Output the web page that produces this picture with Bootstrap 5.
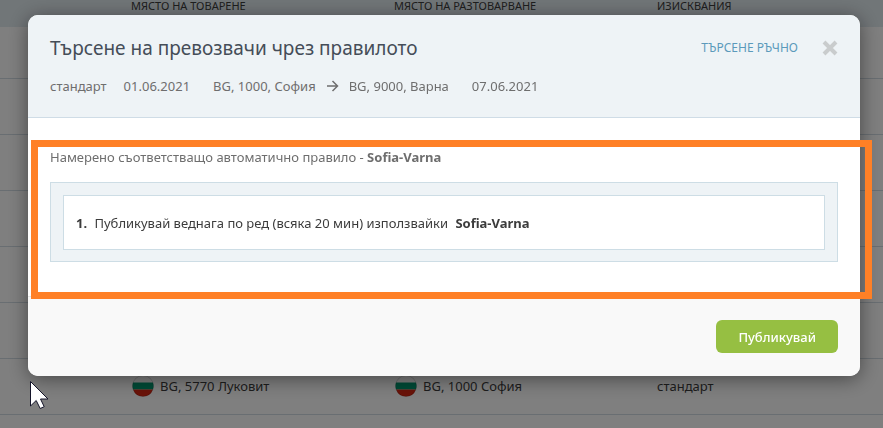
<!DOCTYPE html>
<html lang="bg">
<head>
<meta charset="utf-8">
<meta name="viewport" content="width=device-width, initial-scale=1">
<title>Търсене на превозвачи</title>
<link href="https://cdn.jsdelivr.net/npm/bootstrap@5.3.0/dist/css/bootstrap.min.css" rel="stylesheet">
<style>
  body { font-family: "Noto Sans", "Open Sans", sans-serif; font-size: 13px; line-height: 20px; color: #3c3c3c; }
  .loads { table-layout: fixed; color: #3c3c3c; }
  .loads th { height: 27px; padding: 0 0 15px; font-size: 11px; line-height: 12px; font-weight: 400; background: #e3ecf1; border: 0; vertical-align: bottom; color: #3c3c3c; }
  .loads td { height: 56px; padding: 0; vertical-align: middle; border-bottom: 1px solid #d2dce4; }
  .loads tbody tr:first-child td { height: 51px; }
  .col-lead { width: 131px; }
  .col-place { width: 263px; }
  .flag { width: 22px; height: 22px; margin: 0 6px 0 1px; }
  .modal-backdrop { --bs-backdrop-opacity: .5; }
  .rule-dialog { max-width: none; margin: 15px 23px 15px 28px; }
  .rule-dialog .modal-content { border: 0; border-radius: 10px; box-shadow: 0 3px 20px rgba(0, 0, 0, .45); }
  .rule-head { padding: 20px 22px 21px; background: #eef3f6; border-bottom: 1px solid #cfdce6; border-radius: 10px 10px 0 0; }
  .rule-title { font-size: 19px; line-height: 26px; font-weight: 400; color: #454d58; }
  .manual { font-size: 12px; line-height: 20px; color: #5b9abb; }
  .close-x { width: 16px; height: 16px; line-height: 0; }
  .trip { color: #6e6e6e; margin-top: 15px; }
  .gap-date { margin-left: 17px; }
  .gap-place { margin-left: 23px; }
  .gap-arrow { margin: 0 10px; }
  .rule-body { padding: 29px 22px 34px; color: #6e6e6e; }
  .rule-list { margin-top: 15px; padding: 12px 12px 11px; background: #eef3f6; border: 1px solid #cddde5; }
  .rule-item { padding: 17px 12px 16px; background: #fff; border: 1px solid #cddde5; color: #3c3c3c; }
  .rule-foot { padding: 23px 22px; background: #f9f9f9; border-top: 1px solid #e5e5e5; border-radius: 0 0 10px 10px; }
  .btn-publish { --bs-btn-color: #fff; --bs-btn-bg: #96bf42; --bs-btn-hover-color: #fff; --bs-btn-hover-bg: #86ad38; padding: 7px 22px 6px; font-size: 13px; line-height: 20px; font-weight: 500; border: 0; border-radius: 6px; }
  .highlight-frame { top: 125px; left: 3px; right: -12px; height: 159px; border: 7px solid #ff8026; pointer-events: none; z-index: 2; }
  .pointer { top: 380px; left: 29px; width: 20px; height: 29px; z-index: 1100; pointer-events: none; }
</style>
</head>
<body>
<table class="loads table mb-0">
  <colgroup><col class="col-lead"><col class="col-place"><col class="col-place"><col></colgroup>
  <thead>
    <tr><th></th><th scope="col">МЯСТО НА ТОВАРЕНЕ</th><th scope="col">МЯСТО НА РАЗТОВАРВАНЕ</th><th scope="col">ИЗИСКВАНИЯ</th></tr>
  </thead>
  <tbody>
    <tr><td></td><td></td><td></td><td></td></tr>
    <tr><td></td><td></td><td></td><td></td></tr>
    <tr><td></td><td></td><td></td><td></td></tr>
    <tr><td></td><td></td><td></td><td></td></tr>
    <tr><td></td><td></td><td></td><td></td></tr>
    <tr><td></td><td></td><td></td><td></td></tr>
    <tr>
      <td></td>
      <td><div class="d-flex align-items-center"><svg class="flag" viewBox="0 0 22 22" aria-hidden="true"><circle cx="11" cy="11" r="10.5" fill="#fff"/><path fill="#00966e" d="M1.100 7.500h19.800a10.500 10.500 0 0 1 0 7H1.100a10.500 10.500 0 0 1 0-7z"/><path fill="#d62612" d="M1.100 14.500h19.800a10.500 10.500 0 0 1-19.800 0z"/><circle cx="11" cy="11" r="10.5" fill="none" stroke="#000" stroke-opacity=".15"/></svg>BG, 5770 Луковит</div></td>
      <td><div class="d-flex align-items-center"><svg class="flag" viewBox="0 0 22 22" aria-hidden="true"><circle cx="11" cy="11" r="10.5" fill="#fff"/><path fill="#00966e" d="M1.100 7.500h19.800a10.500 10.500 0 0 1 0 7H1.100a10.500 10.500 0 0 1 0-7z"/><path fill="#d62612" d="M1.100 14.500h19.800a10.500 10.500 0 0 1-19.800 0z"/><circle cx="11" cy="11" r="10.5" fill="none" stroke="#000" stroke-opacity=".15"/></svg>BG, 1000 София</div></td>
      <td>стандарт</td>
    </tr>
  </tbody>
</table>

<div class="modal-backdrop show"></div>
<div class="modal show d-block overflow-hidden" role="dialog" aria-modal="true" aria-labelledby="rule-title">
  <div class="modal-dialog rule-dialog">
    <div class="modal-content">
      <div class="rule-head">
        <div class="d-flex align-items-center">
          <h1 class="rule-title mb-0 me-auto" id="rule-title">Търсене на превозвачи чрез правилото</h1>
          <a class="manual text-decoration-none me-4" href="#">ТЪРСЕНЕ РЪЧНО</a>
          <button class="close-x btn p-0 border-0" type="button" aria-label="Затвори">
            <svg width="16" height="16" viewBox="0 0 16 16" aria-hidden="true"><path d="M2 2l12 12M14 2L2 14" stroke="#c9cccd" stroke-width="4"/></svg>
          </button>
        </div>
        <div class="trip d-flex flex-wrap align-items-center">
          <span>стандарт</span>
          <span class="gap-date">01.06.2021</span>
          <span class="gap-place">BG, 1000, София</span>
          <svg class="gap-arrow" width="13" height="12" viewBox="0 0 13 12" role="img" aria-label="до"><path d="M1 6h10M6.500 1l5 5-5 5" fill="none" stroke="#6e6e6e" stroke-width="1.500"/></svg>
          <span>BG, 9000, Варна</span>
          <span class="gap-place">07.06.2021</span>
        </div>
      </div>
      <div class="rule-body">
        <div>Намерено съответстващо автоматично правило - <strong>Sofia-Varna</strong></div>
        <div class="rule-list">
          <div class="rule-item"><strong class="me-1">1.</strong> Публикувай веднага по ред (всяка 20 мин) използвайки <strong class="ms-1">Sofia-Varna</strong></div>
        </div>
      </div>
      <div class="rule-foot d-flex justify-content-end">
        <button class="btn btn-publish" type="button">Публикувай</button>
      </div>
      <div class="highlight-frame position-absolute" aria-hidden="true"></div>
    </div>
  </div>
</div>

<svg class="pointer position-absolute" viewBox="0 0 20 29" aria-hidden="true"><path d="M1.500 1.500v24.500l5.700-5.500 4 8 4-1.800-3.700-7.700h7.500z" fill="#fff" stroke="#15152a" stroke-width="1"/></svg>
<script src="https://cdn.jsdelivr.net/npm/bootstrap@5.3.0/dist/js/bootstrap.bundle.min.js"></script>
</body>
</html>
